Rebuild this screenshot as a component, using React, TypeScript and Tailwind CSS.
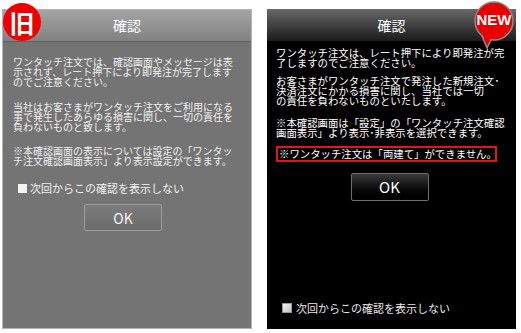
import React from 'react';

const jp = { fontFamily: '"Noto Sans CJK JP", "Noto Sans", sans-serif' };

function Lines({ lines, className = '' }: { lines: string[]; className?: string }) {
  return (
    <p className={`whitespace-nowrap ${className}`}>
      {lines.map((l, i) => (
        <span key={i} className="block">{l}</span>
      ))}
    </p>
  );
}

function OldDialog() {
  return (
    <div className="flex h-[320px] w-[250px] flex-col border border-[#b4b4b4] bg-[#747474]">
      <div className="flex h-[32px] items-center justify-center border-b border-[#5e5e5e] bg-gradient-to-b from-[#a4a4a4] to-[#828282] text-[14px] text-white">
        確認
      </div>
      <div className="flex flex-col px-[10px] pt-[15px] text-[10px] leading-[10px] text-[#f2f2f2]">
        <Lines lines={['ワンタッチ注文では、確認画面やメッセージは表', '示されず、レート押下により即発注が完了します', 'のでご注意ください。']} />
        <Lines className="mt-[15px]" lines={['当社はお客さまがワンタッチ注文をご利用になる', '事で発生したあらゆる損害に関し、一切の責任を', '負わないものと致します。']} />
        <Lines className="mt-[14px]" lines={['※本確認画面の表示については設定の「ワンタッ', 'チ注文確認画面表示」より表示設定ができます。']} />
        <div className="mt-[17px] flex items-center gap-[3px] pl-[5px] text-[11px]">
          <span className="h-[9px] w-[9px] bg-[#f4f4f4]" />
          <span>次回からこの確認を表示しない</span>
        </div>
        <div className="mt-[11px] flex justify-center pr-[8px]">
          <button className="flex h-[27px] w-[78px] items-center justify-center rounded-[2px] border border-[#9c9c9c] bg-gradient-to-b from-[#7c7c7c] to-[#6c6c6c] text-[14px] text-[#f4f4f4]">
            OK
          </button>
        </div>
      </div>
    </div>
  );
}

function NewDialog() {
  return (
    <div className="flex h-[320px] w-[249px] flex-col bg-black">
      <div className="flex h-[32px] items-center justify-center bg-gradient-to-b from-[#6a6a6a] to-[#1c1c1c] text-[14px] text-white">
        確認
      </div>
      <div className="flex flex-1 flex-col px-[9px] pt-[7px] text-[10.4px] leading-[10px] text-white">
        <Lines lines={['ワンタッチ注文は、レート押下により即発注が完', '了しますのでご注意ください。']} />
        <Lines className="mt-[8px]" lines={['お客さまがワンタッチ注文で発注した新規注文･', '決済注文にかかる損害に関し、当社では一切', 'の責任を負わないものといたします。']} />
        <Lines className="mt-[12px]" lines={['※本確認画面は「設定」の「ワンタッチ注文確認', '画面表示」より表示･非表示を選択できます。']} />
        <div className="mt-[8px] w-[221px] whitespace-nowrap border-2 border-[#e4141e] px-[1px] py-[1px] leading-[10px]">
          ※ワンタッチ注文は「両建て」ができません。
        </div>
        <div className="mt-[11px] flex justify-center pr-[4px]">
          <button className="flex h-[28px] w-[78px] items-center justify-center rounded-[2px] border border-[#6e6e6e] bg-gradient-to-b from-[#3a3a3a] to-[#000000] text-[15px] text-white">
            OK
          </button>
        </div>
        <div className="mt-auto mb-[16px] flex items-center gap-[4px] pl-[6px] text-[11px] text-[#e8e8e8]">
          <span className="h-[10px] w-[10px] border border-[#9a9a9a] bg-gradient-to-br from-[#f4f4f4] to-[#c4c4c4]" />
          <span>次回からこの確認を表示しない</span>
        </div>
      </div>
    </div>
  );
}

export default function App() {
  return (
    <div className="relative h-[333px] w-[521px] overflow-hidden bg-white" style={jp}>
      <div className="flex gap-[15px] pl-[2px] pt-[9px]">
        <OldDialog />
        <NewDialog />
      </div>

      <div className="absolute left-[3px] top-[3px] flex h-[38px] w-[38px] items-center justify-center rounded-full bg-[#f00000] text-[25px] font-bold leading-none text-white [text-shadow:0_0_1px_#600]">
        旧
      </div>

      <div className="absolute left-[472px] top-[1px] h-[48px] w-[46px]">
        <svg width="46" height="48" viewBox="0 0 46 48" className="absolute left-0 top-0">
          <path d="M10 35 L15 47 L19 39 Z" fill="#e80000" stroke="#8a8a8a" strokeWidth="1.5" strokeLinejoin="round" />
          <circle cx="22" cy="20" r="19" fill="#e80000" stroke="#8a8a8a" strokeWidth="1.5" />
          <path d="M11 34 L15 44 L19 37" fill="#e80000" />
        </svg>
        <div className="absolute left-[3px] top-[10px] w-[38px] text-center font-['Liberation_Sans'] text-[15px] font-bold leading-[18px] text-white">
          NEW
        </div>
      </div>
    </div>
  );
}
